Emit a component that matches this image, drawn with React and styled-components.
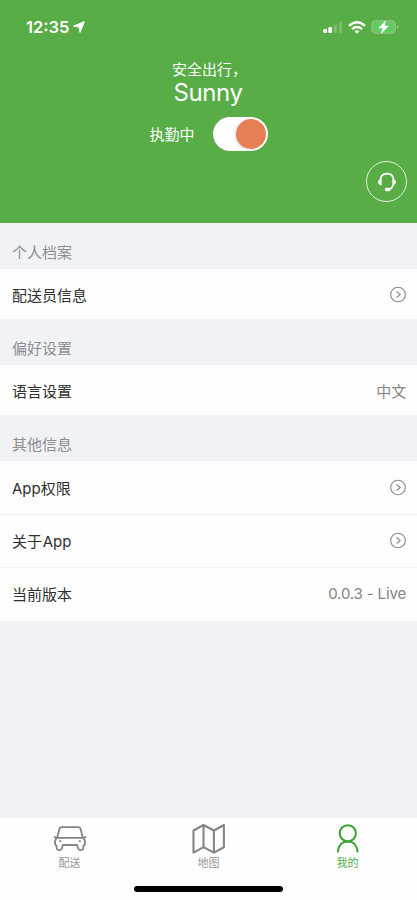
import React from 'react';
import styled, { createGlobalStyle } from 'styled-components';

const GlobalStyle = createGlobalStyle`
  * {
    box-sizing: border-box;
  }
  body {
    margin: 0;
    background: #f0f2f6;
    font-family: Inter, 'Noto Sans CJK SC', sans-serif;
  }
`;

const Screen = styled.div`
  height: 900px;
  display: flex;
  flex-direction: column;
  overflow: hidden;
`;

const Header = styled.header`
  height: 223px;
  flex: none;
  display: flex;
  flex-direction: column;
  background: #58ad47;
  color: #fff;
`;

const StatusBar = styled.div`
  height: 54px;
  padding: 0 18px 0 26px;
  display: flex;
  align-items: center;
  justify-content: space-between;
`;

const Clock = styled.div`
  display: flex;
  align-items: center;
  gap: 4px;
  font-size: 16.5px;
  font-weight: 600;
  line-height: 20px;
`;

const StatusIcons = styled.div`
  display: flex;
  align-items: center;
  gap: 5px;
`;

const Greeting = styled.div`
  height: 20px;
  margin-top: 6px;
  padding-left: 2px;
  font-size: 15px;
  line-height: 20px;
  text-align: center;
`;

const UserName = styled.div`
  height: 28px;
  margin-top: -1px;
  padding-right: 1px;
  font-size: 24px;
  line-height: 28px;
  letter-spacing: -0.4px;
  text-align: center;
`;

const DutyRow = styled.div`
  height: 34px;
  margin-top: 10px;
  display: flex;
  align-items: center;
  justify-content: center;
  gap: 18px;
  font-size: 15px;
`;

const DutyLabel = styled.span`
  padding-bottom: 2px;
`;

const Switch = styled.div`
  width: 55px;
  height: 34px;
  padding: 2px;
  display: flex;
  align-items: center;
  justify-content: ${(props) => (props.$on ? 'flex-end' : 'flex-start')};
  border-radius: 17px;
  background: #fff;
`;

const Knob = styled.div`
  width: 30px;
  height: 30px;
  border-radius: 50%;
  background: #e68054;
  box-shadow: -1px 1px 3px rgba(0, 0, 0, 0.15);
`;

const SupportButton = styled.div`
  width: 41px;
  height: 41px;
  margin: 10px 10px 0 auto;
  display: flex;
  align-items: center;
  justify-content: center;
  border: 1.5px solid #e4f5e0;
  border-radius: 50%;
`;

const SectionTitle = styled.div`
  height: 46px;
  padding: 14px 12px 0;
  color: #8c8e91;
  font-size: 15px;
  line-height: 32px;
`;

const Row = styled.div`
  height: ${(props) => props.$height}px;
  padding: 0 11px 0 12px;
  display: flex;
  align-items: center;
  justify-content: space-between;
  background: #fefefe;
  color: #303030;
  font-size: 15px;
  word-spacing: -3.5px;

  & + & {
    border-top: 1px solid #f2f3f5;
    padding-bottom: 2px;
  }
`;

const RowValue = styled.span`
  color: #858585;
  font-size: 15px;
  letter-spacing: -0.15px;
  word-spacing: 0;
`;

const TabBar = styled.nav`
  height: 82px;
  margin-top: auto;
  display: flex;
  flex-direction: column;
  align-items: center;
  background: #fefefe;
`;

const Tabs = styled.div`
  width: 100%;
  height: 68px;
  display: flex;
`;

const Tab = styled.div`
  flex: 1;
  padding-top: 4px;
  display: flex;
  flex-direction: column;
  align-items: center;
  color: ${(props) => (props.$active ? '#36a32f' : '#858585')};
`;

const TabLabel = styled.span`
  font-size: 11px;
  line-height: 14px;
  opacity: 0.85;
`;

const HomeIndicator = styled.div`
  width: 149px;
  height: 6px;
  border-radius: 3px;
  background: #000;
`;

function LocationIcon() {
  return (
    <svg width="12" height="12" viewBox="0 0 12 12" fill="#fff">
      <path d="M11.2.8 7 11.2 6.3 6 .8 5.1Z" stroke="#fff" strokeWidth="1.1" strokeLinejoin="round" />
    </svg>
  );
}

function SignalIcon() {
  return (
    <svg width="20" height="12" viewBox="0 0 20 12" fill="#fff">
      <rect x="0.3" y="8" width="3.8" height="4" rx="1" />
      <rect x="5.3" y="6" width="3.8" height="6" rx="1" />
      <rect x="11" y="3.5" width="3" height="8.5" rx="1" opacity="0.22" />
      <rect x="16" y="0.5" width="3" height="11.5" rx="1" opacity="0.22" />
    </svg>
  );
}

function WifiIcon() {
  return (
    <svg width="18" height="13" viewBox="0 0 18 13" fill="none" stroke="#fff" strokeWidth="2.3">
      <path d="M1 4.8Q9-2.2 17 4.8" />
      <path d="M4 8.1Q9 3.8 14 8.1" />
      <path d="m6.5 10.3 2.5 2.5 2.5-2.5Q9 8 6.5 10.3Z" fill="#fff" stroke="none" />
    </svg>
  );
}

function BatteryIcon() {
  return (
    <svg width="28" height="14" viewBox="0 0 28 14">
      <rect x="0.5" y="0.5" width="24" height="13" rx="4" fill="#7bc26c" stroke="#80c473" />
      <rect x="2.5" y="2.5" width="20" height="9" rx="2.5" fill="#60cb63" />
      <path d="M26 5v4q1.5-.5 1.5-2T26 5Z" fill="#8cca80" />
      <path d="M14.5.8 7.7 8h4l-1.2 5.2L17.4 6h-4Z" fill="#fff" stroke="#fff" strokeWidth="0.5" />
    </svg>
  );
}

function HeadsetIcon() {
  return (
    <svg width="20" height="20" viewBox="0 0 20 20" fill="none" stroke="#fff" strokeLinecap="round">
      <path d="M3.3 8.5C3.5 4.3 6 1.6 10 1.6s6.5 2.7 6.7 6.9" strokeWidth="1.7" />
      <path d="M3.8 7.5Q1.4 8 1.4 10t2.4 3ZM16.2 7.5q2.4.5 2.4 2.5t-2.4 3Z" fill="#fff" strokeWidth="1" />
      <path d="M16.3 12.8q-1 3.7-4.3 4.5" strokeWidth="1.5" />
      <path d="M9.6 17.5h2.2" strokeWidth="3.6" />
    </svg>
  );
}

function ChevronCircle() {
  return (
    <svg width="17" height="17" viewBox="0 0 17 17" fill="none" stroke="#8b8b8b" strokeWidth="1.1">
      <circle cx="9" cy="8.5" r="7.3" />
      <path d="m7.6 5.5 3.6 3-3.6 3" />
    </svg>
  );
}

function CarIcon() {
  return (
    <svg width="34" height="34" viewBox="0 0 34 34" fill="none" stroke="currentColor" strokeWidth="1.8" strokeLinejoin="round">
      <path d="M4.2 15.8 6.5 6.6Q6.8 5.2 8.5 5.2h17q1.7 0 2 1.4l2.3 9.2" />
      <path d="M4.2 15.8h25.6q2.5 1.5 2.2 5.2-.1 2.5-1.6 2.7v2.2q-.5 2.2-2.6 2.2-2.3 0-2.8-2.2L24.2 23H9.8l-.8 2.9q-.5 2.2-2.8 2.2-2.1 0-2.6-2.2v-2.2Q2.1 23.5 2 21q-.3-3.7 2.2-5.2Z" />
      <path d="M1 14.9 4.3 16M33 14.9 29.7 16" />
      <path d="M6.3 19.2h2M25.7 19.2h2" />
    </svg>
  );
}

function MapIcon() {
  return (
    <svg width="34" height="34" viewBox="0 0 34 34" fill="none" stroke="currentColor" strokeWidth="2.1" strokeLinejoin="round">
      <path d="M1.5 8.5 11.5 3l10.4 5.5L31.9 3v22.3l-10 5.3-10.4-5.5-10 5.5ZM11.5 3v22.1M21.9 8.5v22.1" />
    </svg>
  );
}

function PersonIcon() {
  return (
    <svg width="34" height="34" viewBox="0 0 34 34" fill="none" stroke="currentColor" strokeWidth="2" strokeLinecap="round">
      <circle cx="16.8" cy="11.3" r="8.1" />
      <path d="M6.9 29.5C7.6 23.5 11.1 19.5 16.8 19.5s9.2 4 9.7 10" />
    </svg>
  );
}

const sections = [
  { title: '个人档案', rows: [{ label: '配送员信息', height: 50 }] },
  { title: '偏好设置', rows: [{ label: '语言设置', value: '中文', height: 50 }] },
  {
    title: '其他信息',
    rows: [
      { label: 'App权限', height: 53 },
      { label: '关于 App', height: 53 },
      { label: '当前版本', value: '0.0.3 - Live', height: 54 },
    ],
  },
];

const tabs = [
  { label: '配送', Icon: CarIcon },
  { label: '地图', Icon: MapIcon },
  { label: '我的', Icon: PersonIcon, active: true },
];

export default function App() {
  return (
    <Screen>
      <GlobalStyle />
      <Header>
        <StatusBar>
          <Clock>
            12:35
            <LocationIcon />
          </Clock>
          <StatusIcons>
            <SignalIcon />
            <WifiIcon />
            <BatteryIcon />
          </StatusIcons>
        </StatusBar>
        <Greeting lang="zh-CN">安全出行，</Greeting>
        <UserName>Sunny</UserName>
        <DutyRow>
          <DutyLabel>执勤中</DutyLabel>
          <Switch $on>
            <Knob />
          </Switch>
        </DutyRow>
        <SupportButton>
          <HeadsetIcon />
        </SupportButton>
      </Header>

      {sections.map(({ title, rows }) => (
        <section key={title}>
          <SectionTitle>{title}</SectionTitle>
          {rows.map(({ label, value, height }) => (
            <Row key={label} $height={height}>
              {label}
              {value ? <RowValue>{value}</RowValue> : <ChevronCircle />}
            </Row>
          ))}
        </section>
      ))}

      <TabBar>
        <Tabs>
          {tabs.map(({ label, Icon, active }) => (
            <Tab key={label} $active={active}>
              <Icon />
              <TabLabel>{label}</TabLabel>
            </Tab>
          ))}
        </Tabs>
        <HomeIndicator />
      </TabBar>
    </Screen>
  );
}
